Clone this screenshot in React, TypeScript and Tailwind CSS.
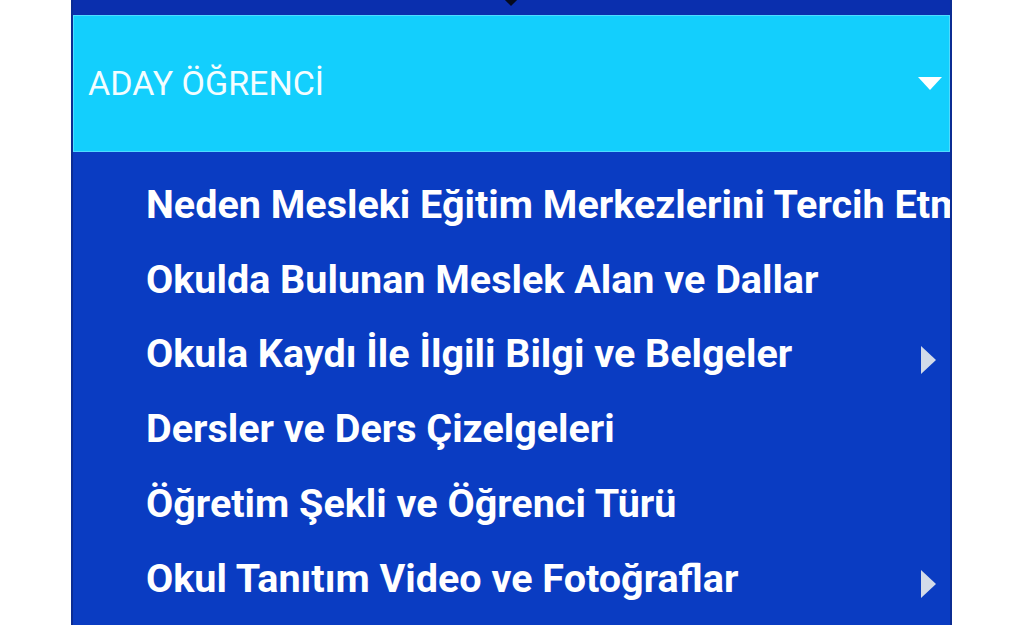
import React from 'react';

type MenuItem = { label: string; hasSub?: boolean };

const items: MenuItem[] = [
  { label: 'Neden Mesleki Eğitim Merkezlerini Tercih Etmeliyim' },
  { label: 'Okulda Bulunan Meslek Alan ve Dallar' },
  { label: 'Okula Kaydı İle İlgili Bilgi ve Belgeler', hasSub: true },
  { label: 'Dersler ve Ders Çizelgeleri' },
  { label: 'Öğretim Şekli ve Öğrenci Türü' },
  { label: 'Okul Tanıtım Video ve Fotoğraflar', hasSub: true },
];

function CaretDown() {
  return (
    <svg width="24" height="13" viewBox="0 0 24 13" className="shrink-0">
      <path d="M0 0 L24 0 L12 13 Z" fill="#ffffff" />
    </svg>
  );
}

function CaretRight() {
  return (
    <svg width="15" height="28" viewBox="0 0 15 28" className="shrink-0">
      <path d="M0 0 L15 14 L0 28 Z" fill="#d3dbe9" />
    </svg>
  );
}

export default function App() {
  return (
    <div className="h-[625px] w-[1024px] overflow-hidden bg-white" style={{ fontFamily: 'Roboto, "Noto Sans", sans-serif' }}>
      <div className="ml-[71px] h-full w-[881px] overflow-hidden border-x-2 border-[#0b2c93] bg-[#0a3cc2]">
        {/* parent menu bar with its dropdown caret */}
        <div className="relative h-[15px] bg-[#0a2fae]">
          <div className="absolute left-[433px] top-[-6px] h-[10px] w-[10px] rotate-45 bg-[#050a1e]" />
        </div>

        {/* dropdown heading */}
        <div className="flex h-[137px] items-center justify-between border border-[#4fdcff] bg-[#13cffd] pl-[14px] pr-[7px]">
          <span className="text-[34px] leading-[1.3] text-[#f4fdff]">ADAY ÖĞRENCİ</span>
          <CaretDown />
        </div>

        {/* submenu links */}
        <ul className="pt-[15px]">
          {items.map((it) => (
            <li key={it.label} className="flex h-[74.8px] items-center pl-[73px]">
              <span className="min-w-0 flex-1 overflow-x-hidden whitespace-nowrap text-[39.5px] font-bold leading-[1.35] text-white">
                {it.label}
              </span>
              {it.hasSub && (
                <span className="mt-[12px] ml-2 mr-[14px]">
                  <CaretRight />
                </span>
              )}
            </li>
          ))}
        </ul>
      </div>
    </div>
  );
}
